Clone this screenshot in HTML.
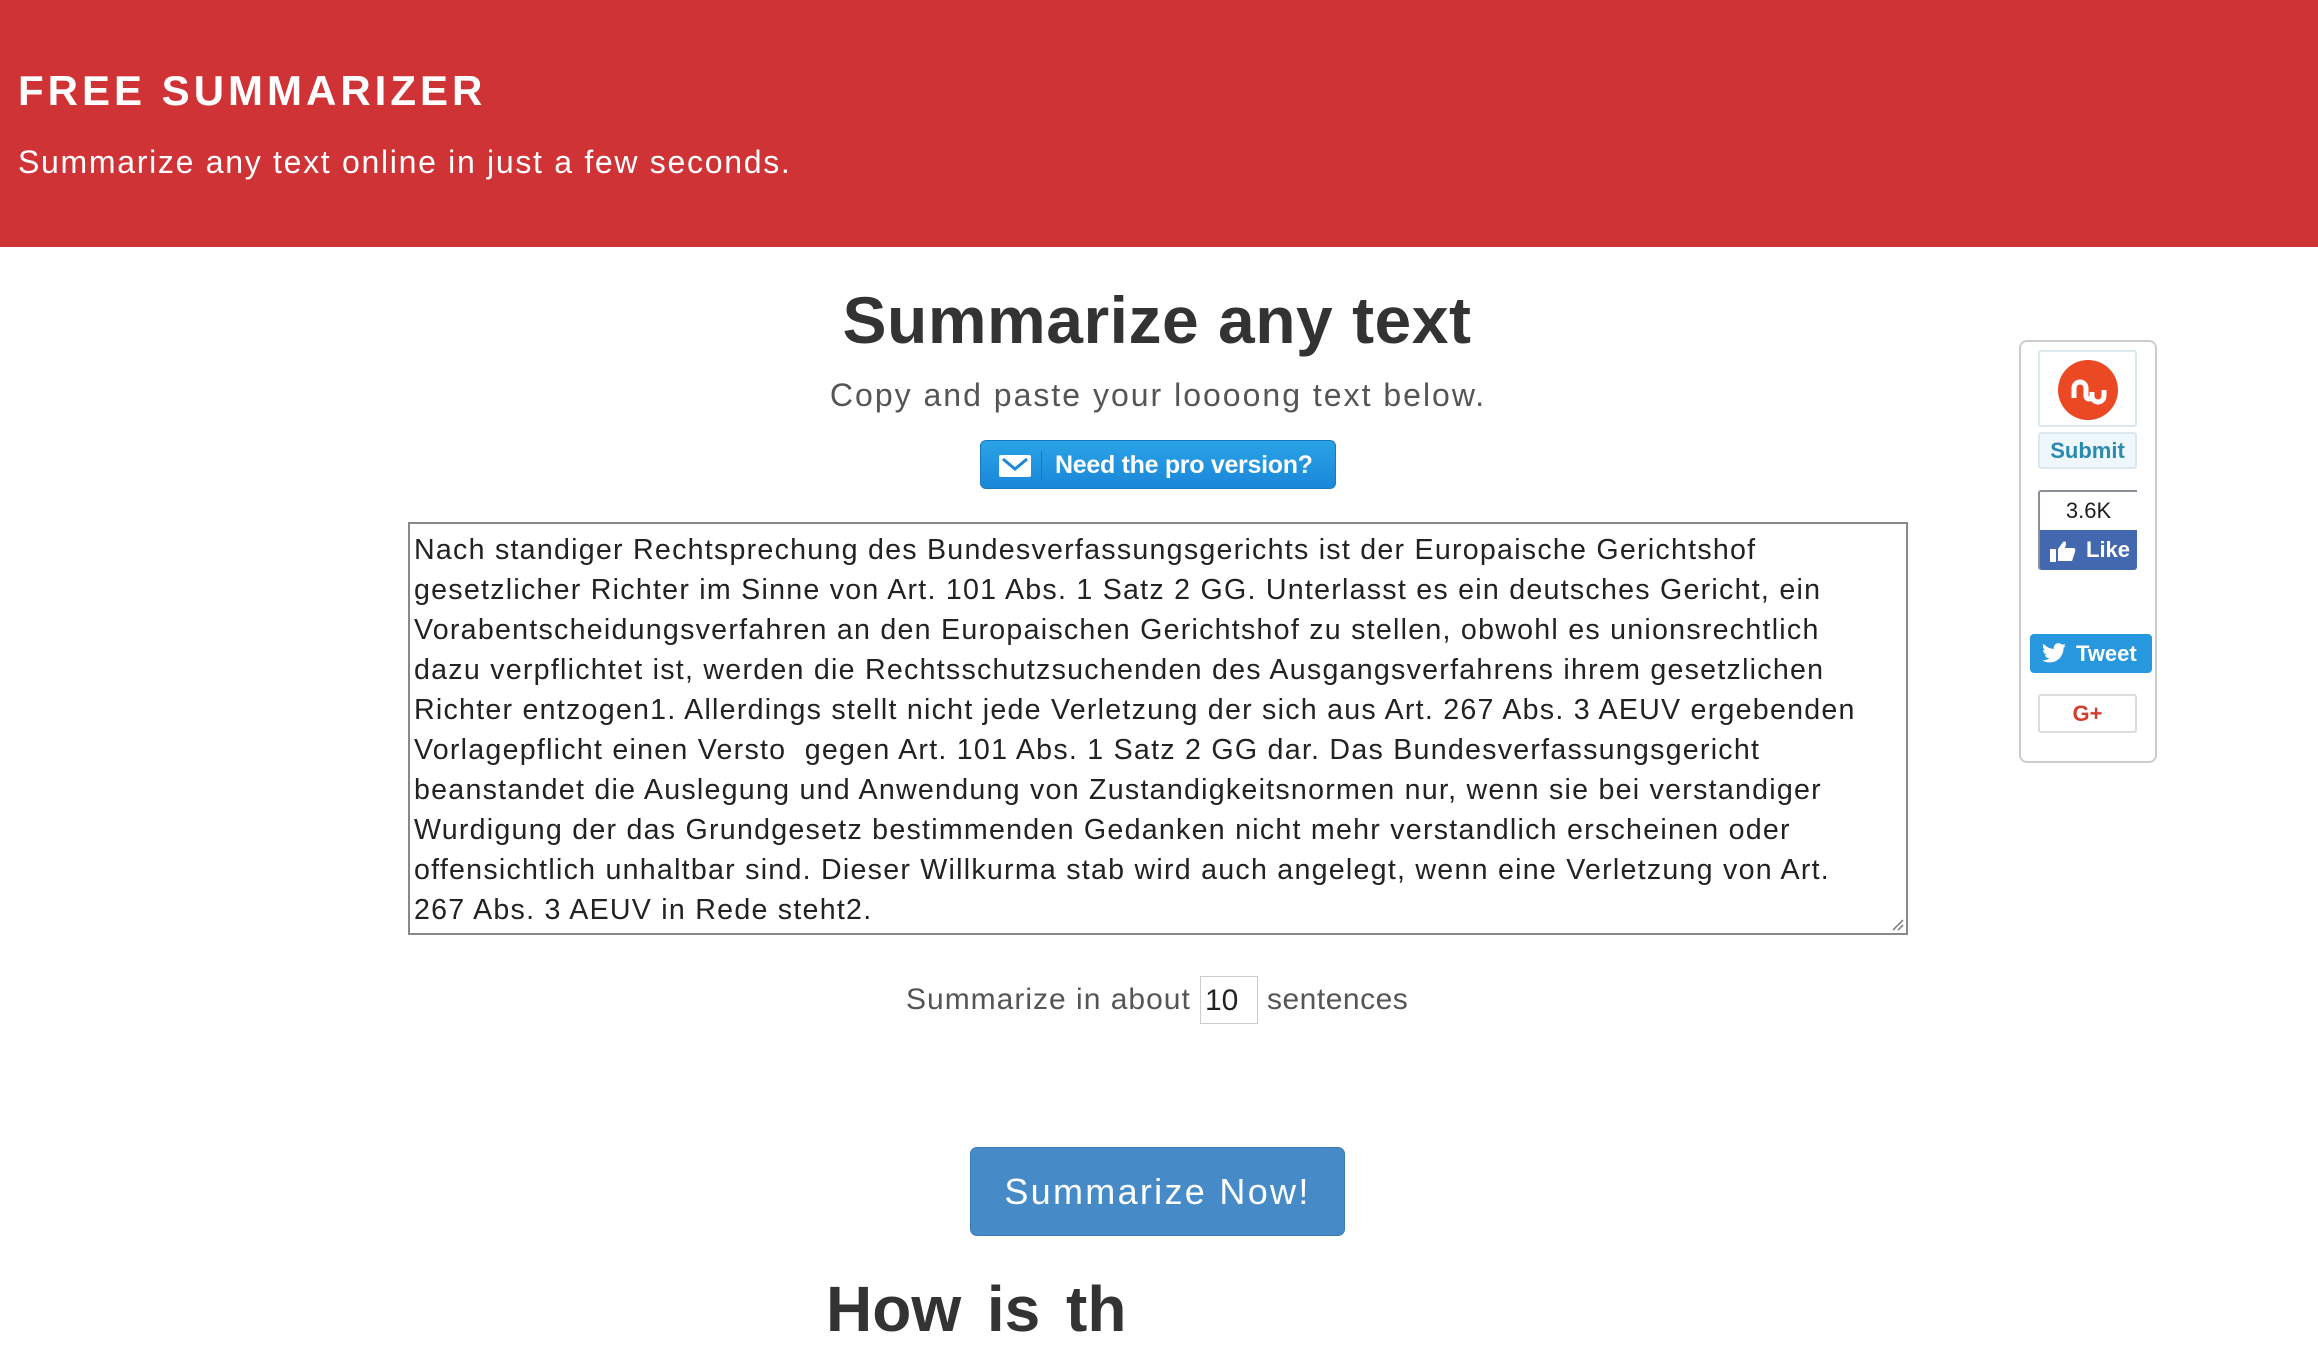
<!DOCTYPE html>
<html><head><meta charset="utf-8">
<style>
*{box-sizing:border-box;margin:0;padding:0}
body{width:2318px;height:1296px;overflow:hidden;background:#fff;font-family:"Liberation Sans",sans-serif;color:#333;position:relative}
.hdr{position:absolute;left:0;top:0;width:2318px;height:247px;background:#cf3336;color:#fff}
.hdr h1{position:absolute;left:18px;top:66px;font-size:42px;font-weight:bold;letter-spacing:4px;line-height:50px}
.hdr p{position:absolute;left:18px;top:142px;font-size:32px;line-height:40px;letter-spacing:1.7px}
.t{position:absolute;left:0;width:2318px;text-align:center}
#title{top:282px;font-size:66px;font-weight:bold;color:#333;line-height:76px;width:2314px;letter-spacing:0.5px}
#sub{top:375px;font-size:32px;color:#555;line-height:40px;width:2316px;letter-spacing:2px}
.pro{position:absolute;left:980px;top:440px;width:356px;height:49px;border-radius:6px;background:linear-gradient(#2aa3e6,#1a87d9);border:1px solid #1a78c2;color:#fff;font-weight:bold;font-size:25px}
.pro .env{position:absolute;left:18px;top:14px;width:32px;height:22px;background:#fff;border-radius:2px}
.pro .div{position:absolute;left:60px;top:10px;width:1px;height:30px;background:#1776bd}
.pro span{position:absolute;left:74px;top:9px;line-height:30px;letter-spacing:-0.3px}
.ta{position:absolute;left:408px;top:522px;width:1500px;height:413px;border:2px solid #888;padding:6px 4px;font-size:28.6px;line-height:40px;color:#222;letter-spacing:1.25px;white-space:nowrap;overflow:hidden}
.ta .rz{position:absolute;right:2px;bottom:2px}
.sent{position:absolute;top:976px;left:0;width:2318px;font-size:30px;color:#555;line-height:48px}
.sent .a{position:absolute;left:906px;letter-spacing:1px}
.sent .in{position:absolute;left:1200px;top:0;width:58px;height:48px;border:1px solid #ccc;color:#222;padding-left:4px}
.sent .b{position:absolute;left:1267px;letter-spacing:0.5px}
.btn{position:absolute;left:970px;top:1147px;width:375px;height:89px;background:#468bc8;border:1px solid #3a7bb5;border-radius:7px;color:#fff;font-size:36px;text-align:center;line-height:87px;letter-spacing:2.3px}
.h2{position:absolute;left:826px;top:1277px;font-size:64px;line-height:64px;font-weight:bold;color:#333;word-spacing:8px}
.soc{position:absolute;left:2019px;top:340px;width:138px;height:423px;border:2px solid #ccc;border-radius:8px}
.su{position:absolute;left:2038px;top:350px;width:99px;height:77px;border:2px solid #dbe8ee;border-radius:3px}
.su .c{position:absolute;left:18px;top:8px;width:60px;height:60px;border-radius:50%;background:#eb4924}
.sub{position:absolute;left:2038px;top:432px;width:99px;height:37px;background:#eef7fc;border:2px solid #dbe8ee;border-radius:3px;color:#2a8ab0;font-weight:bold;font-size:22px;text-align:center;line-height:33px}
.fb{position:absolute;left:2038px;top:490px;width:99px;height:80px;border:2px solid #8a8f99;border-bottom:none;border-right:none;border-radius:3px 0 3px 3px;overflow:hidden}
.fb .n{height:38px;background:#fff;text-align:center;font-size:22px;line-height:38px;color:#1c1e21}
.fb .l{height:40px;background:#4468b0;color:#fff;font-weight:bold;font-size:22px;line-height:40px;padding-left:46px;position:relative}
.tw{position:absolute;left:2030px;top:634px;width:122px;height:39px;background:#2798de;border-radius:4px;color:#fff;font-weight:bold;font-size:22px;line-height:39px;padding-left:46px}
.gp{position:absolute;left:2038px;top:694px;width:99px;height:39px;border:2px solid #ddd;border-radius:3px;color:#d23f31;font-weight:bold;font-size:22px;text-align:center;line-height:35px}
</style></head><body>
<div class="hdr"><h1>FREE SUMMARIZER</h1><p>Summarize any text online in just a few seconds.</p></div>
<div class="t" id="title">Summarize any text</div>
<div class="t" id="sub">Copy and paste your loooong text below.</div>
<div class="pro"><div class="env"><svg width="32" height="22" viewBox="0 0 32 22"><path d="M4 4 L16 14 L28 4" fill="none" stroke="#1a87d9" stroke-width="3"/></svg></div><div class="div"></div><span>Need the pro version?</span></div>
<div class="ta">Nach standiger Rechtsprechung des Bundesverfassungsgerichts ist der Europaische Gerichtshof<br>gesetzlicher Richter im Sinne von Art. 101 Abs. 1 Satz 2 GG. Unterlasst es ein deutsches Gericht, ein<br>Vorabentscheidungsverfahren an den Europaischen Gerichtshof zu stellen, obwohl es unionsrechtlich<br>dazu verpflichtet ist, werden die Rechtsschutzsuchenden des Ausgangsverfahrens ihrem gesetzlichen<br>Richter entzogen1. Allerdings stellt nicht jede Verletzung der sich aus Art. 267 Abs. 3 AEUV ergebenden<br>Vorlagepflicht einen Versto&nbsp; gegen Art. 101 Abs. 1 Satz 2 GG dar. Das Bundesverfassungsgericht<br>beanstandet die Auslegung und Anwendung von Zustandigkeitsnormen nur, wenn sie bei verstandiger<br>Wurdigung der das Grundgesetz bestimmenden Gedanken nicht mehr verstandlich erscheinen oder<br>offensichtlich unhaltbar sind. Dieser Willkurma stab wird auch angelegt, wenn eine Verletzung von Art.<br>267 Abs. 3 AEUV in Rede steht2.<svg class="rz" width="14" height="14" viewBox="0 0 14 14"><path d="M13 3 L3 13 M13 8 L8 13" stroke="#777" stroke-width="1.5"/></svg></div>
<div class="sent"><span class="a">Summarize in about</span><span class="in">10</span><span class="b">sentences</span></div>
<div class="btn">Summarize Now!</div>
<div class="h2">How is th</div>
<div class="soc"></div>
<div class="su"><div class="c"><svg width="60" height="60" viewBox="0 0 60 60"><path d="M16 38 V28 a6 6 0 0 1 12 0 V36 a3 3 0 0 0 6 0 V32 M34 36 a6 6 0 0 0 12 0 V30" fill="none" stroke="#fff" stroke-width="5"/></svg></div></div>
<div class="sub">Submit</div>
<div class="fb"><div class="n">3.6K</div><div class="l"><svg style="position:absolute;left:10px;top:10px" width="26" height="22" viewBox="0 0 26 22"><rect x="0" y="9" width="6" height="13" fill="#fff"/><path d="M8 9 L13 2 Q16 0 16 4 L15 8 H24 Q26 9 25 12 L22 21 H8 Z" fill="#fff"/></svg>Like</div></div>
<div class="tw"><svg style="position:absolute;left:12px;top:9px" width="24" height="20" viewBox="0 0 24 20"><path d="M24 2.4a10 10 0 0 1-2.8.8A5 5 0 0 0 23.3.5a10 10 0 0 1-3.1 1.2A4.9 4.9 0 0 0 11.8 6 14 14 0 0 1 1.7.9a4.9 4.9 0 0 0 1.5 6.6A5 5 0 0 1 1 6.9a4.9 4.9 0 0 0 3.9 4.8 5 5 0 0 1-2.2.1 4.9 4.9 0 0 0 4.6 3.4A9.9 9.9 0 0 1 0 17.3 14 14 0 0 0 7.5 19.5c9 0 14-7.5 14-14v-.6A10 10 0 0 0 24 2.4z" fill="#fff"/></svg>Tweet</div>
<div class="gp">G+</div>
</body></html>
